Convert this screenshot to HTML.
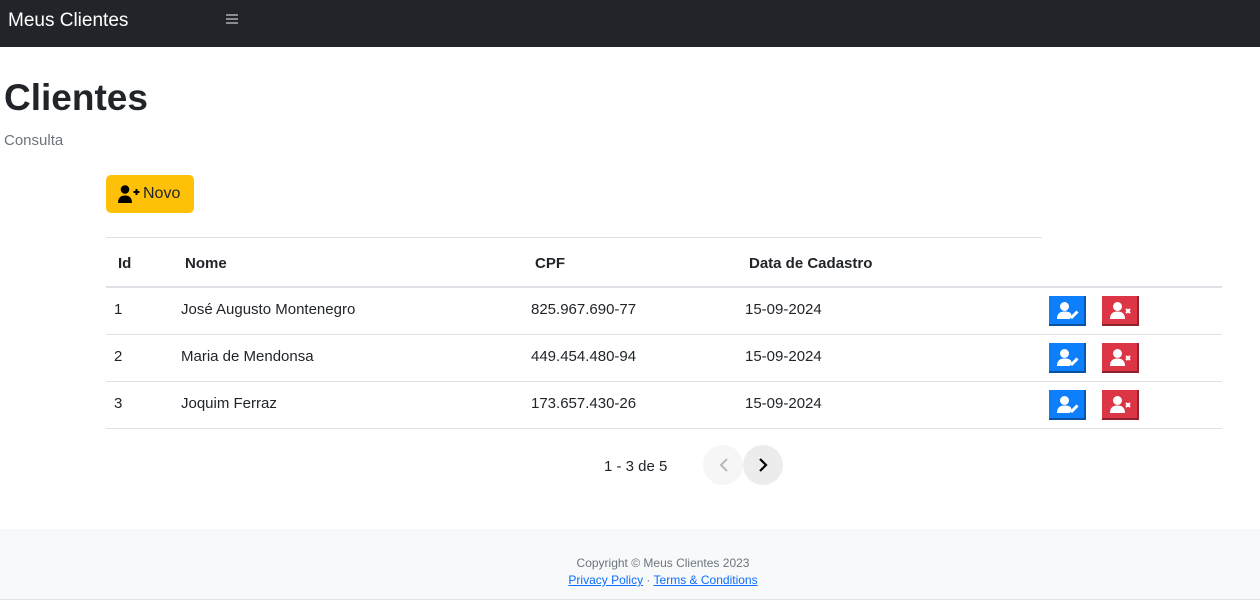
<!DOCTYPE html>
<html><head><style>
*{box-sizing:border-box;margin:0;padding:0}
body{width:1260px;height:602px;font-family:"Liberation Sans",sans-serif;color:#212529;background:#fff;position:relative;overflow:hidden}
.nav{position:absolute;left:0;top:0;width:1260px;height:47px;background:#212529}
.brand{position:absolute;left:8px;top:10px;font-size:19px;color:#fff}
.burger{position:absolute;left:226px;top:14px;width:12px}
.burger i{display:block;height:2px;background:#8a8d90;margin-bottom:2px}
h1{position:absolute;left:4px;top:77px;font-size:37px;font-weight:bold}
.sub{position:absolute;left:4px;top:132px;font-size:15px;color:#6c757d}
.novo{position:absolute;left:106px;top:175px;width:88px;height:38px;background:#ffc107;border-radius:5px;font-size:16px}
.t{position:absolute;font-size:15px}
.th{font-weight:bold}
.ln{position:absolute;height:1px;background:#dee2e6}
.b{position:absolute;width:37px;height:30px;border-bottom:2px solid rgba(0,0,0,.35);border-right:2px solid rgba(0,0,0,.3)}
.blue{background:#0d7efc;left:1049px}
.red{background:#dc3545;left:1102px}
.b svg{position:absolute;left:8px;top:6px}
.pg{position:absolute;top:445px;width:40px;height:40px;border-radius:50%}
.foot{position:absolute;left:0;top:529px;width:1260px;height:71px;background:#f8f9fa;border-bottom:1px solid #dee2e6;text-align:center;font-size:12px;color:#6c757d;padding-left:66px}
.foot a{color:#0d6efd;text-decoration:underline}
</style></head><body>
<div class="nav"><div class="brand">Meus Clientes</div><div class="burger"><i></i><i></i><i></i></div></div>
<h1>Clientes</h1>
<div class="sub">Consulta</div>
<div class="novo"><svg width="22" height="18" viewBox="0 0 22 18" style="position:absolute;left:12px;top:10px"><circle cx="7" cy="4.5" r="4.3" fill="#000"/><path d="M0 18c0-5.5 3-7.5 7-7.5s7 2 7 7.5z" fill="#000"/><path d="M15.5 7h6M18.5 4v6" stroke="#000" stroke-width="2"/></svg><span style="position:absolute;left:37px;top:10px">Novo</span></div>
<div class="ln" style="left:106px;top:237px;width:936px"></div>
<div class="t th" style="left:118px;top:255px">Id</div>
<div class="t th" style="left:185px;top:255px">Nome</div>
<div class="t th" style="left:535px;top:255px">CPF</div>
<div class="t th" style="left:749px;top:255px">Data de Cadastro</div>
<div class="ln" style="left:106px;top:286px;width:1116px;height:2px"></div>
<div class="t" style="left:114px;top:301px">1</div><div class="t" style="left:181px;top:301px">José Augusto Montenegro</div><div class="t" style="left:531px;top:301px">825.967.690-77</div><div class="t" style="left:745px;top:301px">15-09-2024</div>
<div class="ln" style="left:106px;top:334px;width:1116px"></div>
<div class="t" style="left:114px;top:348px">2</div><div class="t" style="left:181px;top:348px">Maria de Mendonsa</div><div class="t" style="left:531px;top:348px">449.454.480-94</div><div class="t" style="left:745px;top:348px">15-09-2024</div>
<div class="ln" style="left:106px;top:381px;width:1116px"></div>
<div class="t" style="left:114px;top:395px">3</div><div class="t" style="left:181px;top:395px">Joquim Ferraz</div><div class="t" style="left:531px;top:395px">173.657.430-26</div><div class="t" style="left:745px;top:395px">15-09-2024</div>
<div class="ln" style="left:106px;top:428px;width:1116px"></div>

<div class="b blue" style="top:296px"><svg width="22" height="17" viewBox="0 0 22 17"><circle cx="7.5" cy="4.5" r="4.5" fill="#fff"/><path d="M0 17c0-5.5 3-7.5 7.5-7.5s6.5 1.3 7 3.5L13 17z" fill="#fff"/><path d="M14 16l6.5-6.5" stroke="#fff" stroke-width="3"/></svg></div>
<div class="b red" style="top:296px"><svg width="22" height="17" viewBox="0 0 22 17"><circle cx="7.5" cy="4.5" r="4.5" fill="#fff"/><path d="M0 17c0-5.5 3-7.5 7.5-7.5s7.5 2 7.5 7.5z" fill="#fff"/><path d="M16 7l4 4M20 7l-4 4" stroke="#fff" stroke-width="2"/></svg></div>
<div class="b blue" style="top:343px"><svg width="22" height="17" viewBox="0 0 22 17"><circle cx="7.5" cy="4.5" r="4.5" fill="#fff"/><path d="M0 17c0-5.5 3-7.5 7.5-7.5s6.5 1.3 7 3.5L13 17z" fill="#fff"/><path d="M14 16l6.5-6.5" stroke="#fff" stroke-width="3"/></svg></div>
<div class="b red" style="top:343px"><svg width="22" height="17" viewBox="0 0 22 17"><circle cx="7.5" cy="4.5" r="4.5" fill="#fff"/><path d="M0 17c0-5.5 3-7.5 7.5-7.5s7.5 2 7.5 7.5z" fill="#fff"/><path d="M16 7l4 4M20 7l-4 4" stroke="#fff" stroke-width="2"/></svg></div>
<div class="b blue" style="top:390px"><svg width="22" height="17" viewBox="0 0 22 17"><circle cx="7.5" cy="4.5" r="4.5" fill="#fff"/><path d="M0 17c0-5.5 3-7.5 7.5-7.5s6.5 1.3 7 3.5L13 17z" fill="#fff"/><path d="M14 16l6.5-6.5" stroke="#fff" stroke-width="3"/></svg></div>
<div class="b red" style="top:390px"><svg width="22" height="17" viewBox="0 0 22 17"><circle cx="7.5" cy="4.5" r="4.5" fill="#fff"/><path d="M0 17c0-5.5 3-7.5 7.5-7.5s7.5 2 7.5 7.5z" fill="#fff"/><path d="M16 7l4 4M20 7l-4 4" stroke="#fff" stroke-width="2"/></svg></div>

<div class="t" style="left:604px;top:458px">1 - 3 de 5</div>
<div class="pg" style="left:703px;background:#f6f6f6"><svg width="40" height="40"><path d="M24 14l-6 6 6 6" fill="none" stroke="#b8b8b8" stroke-width="2"/></svg></div>
<div class="pg" style="left:743px;background:#ececec"><svg width="40" height="40"><path d="M17 14l6 6-6 6" fill="none" stroke="#000" stroke-width="2.2"/></svg></div>

<div class="foot"><div style="margin-top:27px">Copyright © Meus Clientes 2023</div><div style="margin-top:3px"><a>Privacy Policy</a> · <a>Terms &amp; Conditions</a></div></div>
</body></html>
